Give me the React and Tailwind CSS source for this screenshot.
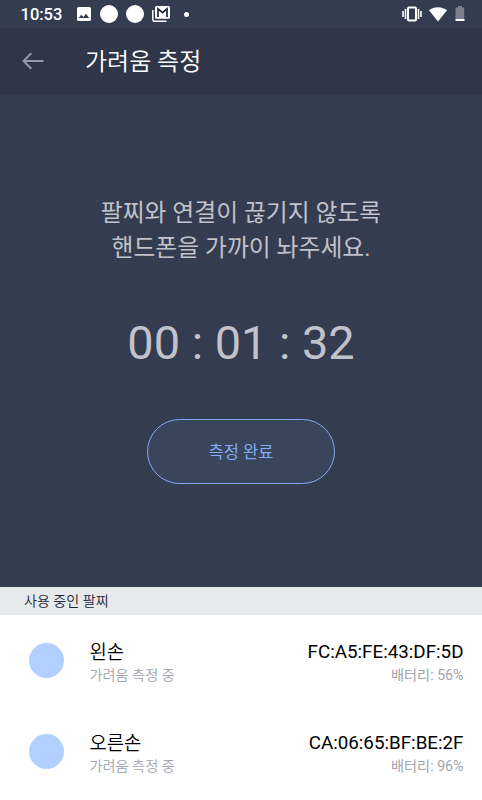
import React from 'react';

const BANDS = [
  { id: 'left', name: '왼손', status: '가려움 측정 중', address: 'FC:A5:FE:43:DF:5D', battery: 56 },
  { id: 'right', name: '오른손', status: '가려움 측정 중', address: 'CA:06:65:BF:BE:2F', battery: 96 }
];

const StatusBar = () => (
  <div className="flex h-7 shrink-0 items-center pl-[20.5px] pr-[17px] text-white">
    <span className="w-[56.5px] pt-[3px] text-[16.5px] leading-none font-medium whitespace-nowrap">10:53</span>
    <svg viewBox="0 0 14 14" className="h-[14px] w-[14px] shrink-0" fill="currentColor">
      <path fillRule="evenodd" d="M1.5 0h11A1.5 1.5 0 0 1 14 1.500v11a1.500 1.500 0 0 1-1.500 1.500h-11A1.500 1.500 0 0 1 0 12.500v-11A1.500 1.500 0 0 1 1.500 0zM4 7.800 1.800 11h10.400L9 6.800 6.500 10z" />
    </svg>
    <span className="ml-[9px] h-[18px] w-[18px] shrink-0 rounded-full bg-white" />
    <span className="ml-2 h-[18px] w-[18px] shrink-0 rounded-full bg-white" />
    {/* stacked mail */}
    <svg viewBox="0 0 18 16" className="ml-2 h-4 w-[18px] shrink-0" fill="none" stroke="currentColor">
      <path d="M.8 4v9.700a1.500 1.500 0 0 0 1.500 1.500H14.500" strokeWidth="1.500" />
      <rect x="3" y="0" width="15" height="12.700" rx="1.500" fill="currentColor" stroke="none" />
      <path d="M6 11V2.800l4.500 3.900L15 2.800V11" stroke="#20263a" strokeWidth="1.700" />
    </svg>
    <span className="ml-[14px] h-[5px] w-[5px] shrink-0 rounded-full bg-white" />
    <svg viewBox="0 0 20 16" className="ml-auto h-4 w-5 shrink-0" fill="none" stroke="currentColor">
      <rect x="6" y="1.500" width="8" height="13" rx="1" strokeWidth="2" />
      <path d="M3.500 3v10M16.500 3v10" strokeWidth="1.600" />
      <path d="M1 5v6M19 5v6" strokeWidth="1.600" />
    </svg>
    <svg viewBox="0 0 18 15" className="ml-[7px] h-[15px] w-[18px] shrink-0" fill="currentColor">
      <path d="M0 3.300C5-.9 13-.9 18 3.300L9 14.500z" />
    </svg>
    <svg viewBox="0 0 10 16" className="ml-2 h-4 w-[10px] shrink-0" fill="currentColor">
      <path opacity=".35" d="M3 0h4v1.500h2.200V13H.5V1.500H3z" />
      <path d="M.5 13h9v2h-9z" />
    </svg>
  </div>
);

const Header = () => (
  <header className="flex h-[67px] shrink-0 items-center bg-[#2e3648] pl-[22px]">
    <svg viewBox="0 0 22 18" className="-mt-px h-[18px] w-[22px] shrink-0" fill="none" stroke="#949aa8" strokeWidth="2">
      <path d="M21.500 9H1.500M9.300 1.200 1.500 9l7.800 7.800" />
    </svg>
    <h1 className="ml-[41px] text-2xl leading-8 font-[350] text-white">가려움 측정</h1>
  </header>
);

const BandRow = ({ band }) => (
  <li className="flex h-[51px] items-center pl-[29px] pr-[18.5px]">
    <span className="h-[35px] w-[35px] shrink-0 rounded-full bg-[#b1d0ff]" />
    <div className="ml-[25.5px] flex-1 pt-[5px]">
      <p className="pt-[5px] text-[18.8px] leading-[19px] font-[350] text-black">{band.name}</p>
      <p className="text-[14.2px] leading-6 font-[350] text-[#a1a4ad]">{band.status}</p>
    </div>
    <div className="pt-[5px] text-right">
      <p className="pt-[3px] text-[18.8px] leading-[21px] text-black">{band.address}</p>
      <p className="text-[14.2px] leading-6 text-[#a1a4ad]">배터리: {band.battery}%</p>
    </div>
  </li>
);

export default function App() {
  return (
    <div className="flex h-[800px] w-full flex-col overflow-hidden bg-[#343c50] font-[Roboto,'Noto_Sans_CJK_KR',sans-serif]">
      <StatusBar />
      <Header />

      <main className="flex flex-1 flex-col items-center pt-[101px]">
        <p className="text-center text-[23.8px] leading-[35px] text-[#c0c3ca]">
          팔찌와 연결이 끊기지 않도록
          <br />
          핸드폰을 가까이 놔주세요.
        </p>
        <div className="mt-[49px] text-[46.9px] leading-[56px] text-[#c0c3ca]">00 : 01 : 32</div>
        <button className="mt-12 h-[65px] w-[188px] rounded-full border border-[#83abf5] bg-[#3a445a] pt-[3px] text-[16.5px] text-[#83abf5]">
          측정 완료
        </button>
      </main>

      <section className="h-[213px] shrink-0 bg-white">
        <h2 className="flex h-7 items-center bg-[#e8e9eb] pt-px pl-6 text-[14.1px] font-[350] text-[#20263a]">사용 중인 팔찌</h2>
        <ul className="flex flex-col gap-10 pt-5">
          {BANDS.map((band) => (
            <BandRow key={band.id} band={band} />
          ))}
        </ul>
      </section>
    </div>
  );
}
